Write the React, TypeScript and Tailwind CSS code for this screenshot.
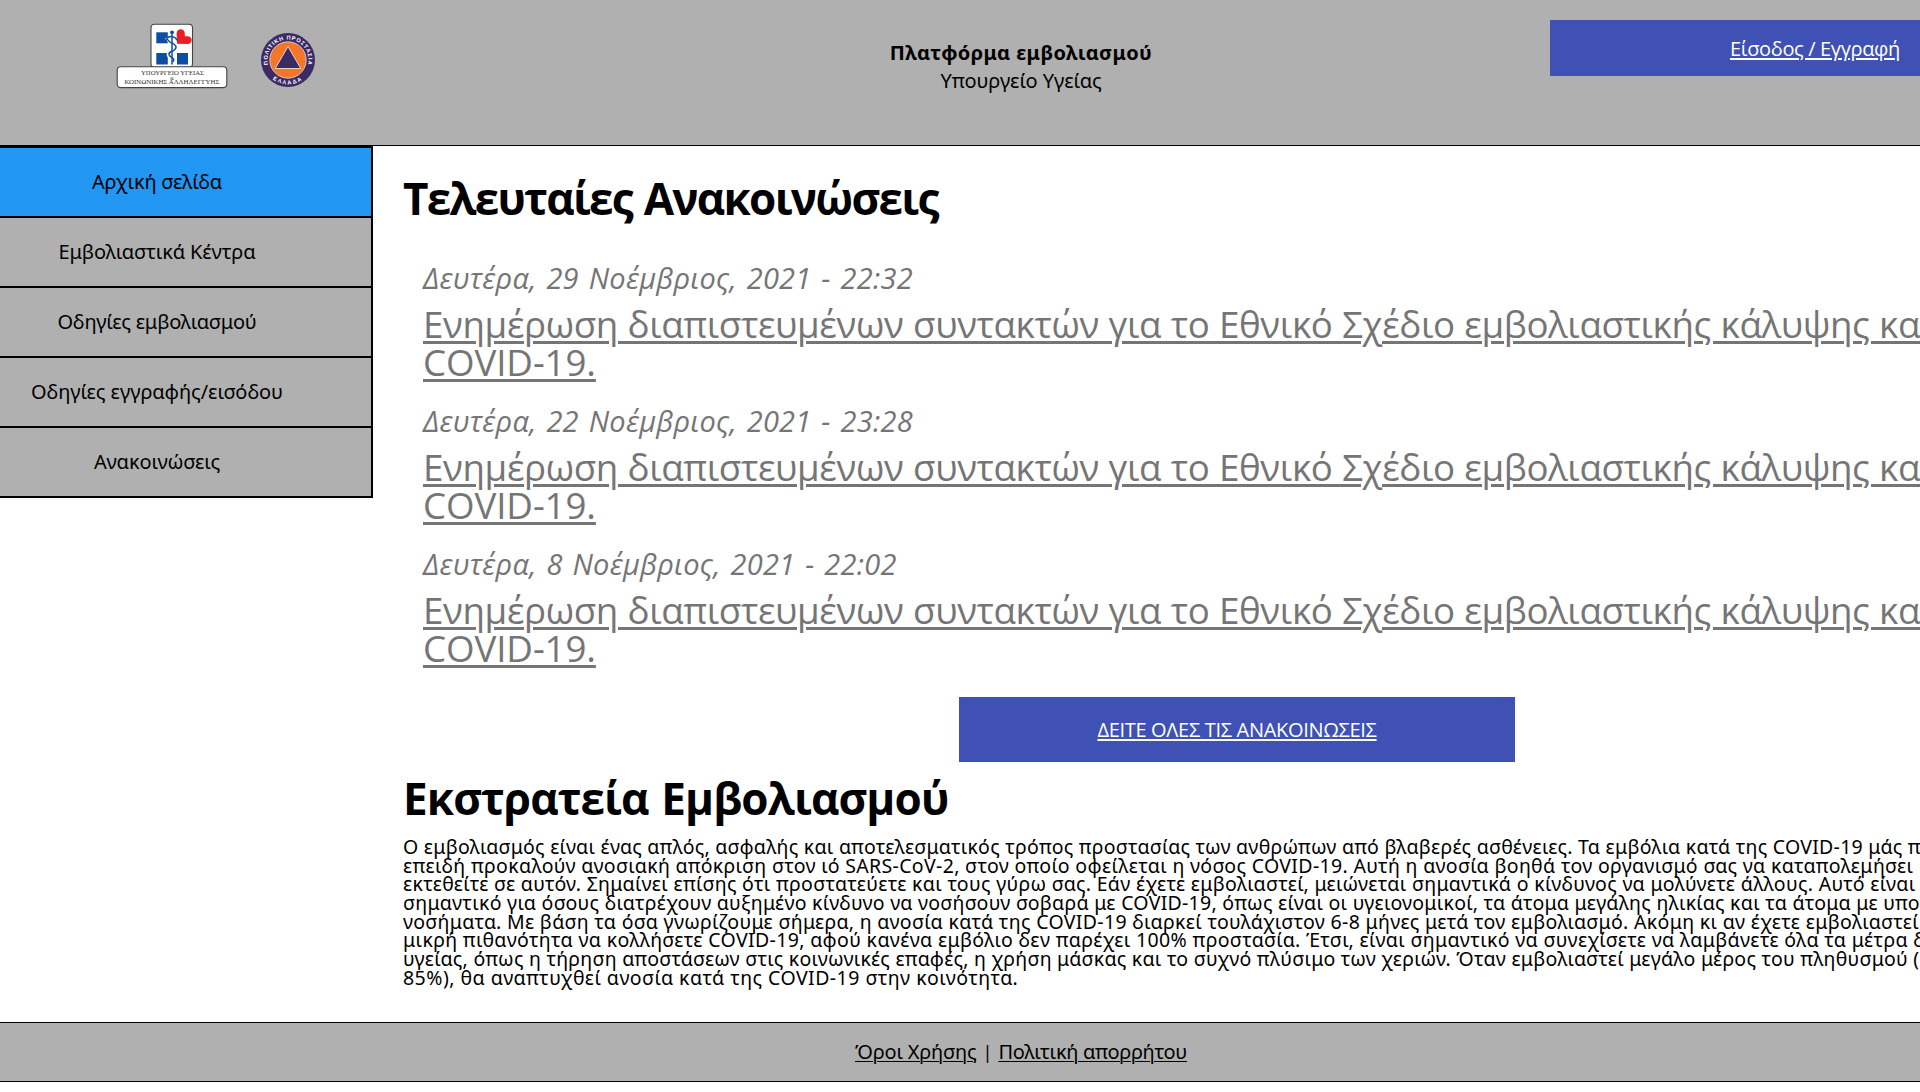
const navItems = [
  { label: "Αρχική σελίδα", className: "bg-[#2196f3] tracking-[-0.23px]" },
  { label: "Εμβολιαστικά Κέντρα", className: "bg-[#b0b0b0] tracking-[-0.15px]" },
  { label: "Οδηγίες εμβολιασμού", className: "bg-[#b0b0b0] tracking-[-0.24px]" },
  { label: "Οδηγίες εγγραφής/εισόδου", className: "bg-[#b0b0b0] tracking-[-0.07px]" },
  { label: "Ανακοινώσεις", className: "bg-[#b0b0b0] tracking-[-0.14px]" },
];

const announcements = [
  "Δευτέρα, 29 Νοέμβριος, 2021 - 22:32",
  "Δευτέρα, 22 Νοέμβριος, 2021 - 23:28",
  "Δευτέρα, 8 Νοέμβριος, 2021 - 22:02",
];

const campaignLines = [
  { text: "Ο εμβολιασμός είναι ένας απλός, ασφαλής και αποτελεσματικός τρόπος προστασίας των ανθρώπων από βλαβερές ασθένειες. Τα εμβόλια κατά της COVID-19 μάς π", className: "tracking-[0.257px]" },
  { text: "επειδή προκαλούν ανοσιακή απόκριση στον ιό SARS-CoV-2, στον οποίο οφείλεται η νόσος COVID-19. Αυτή η ανοσία βοηθά τον οργανισμό σας να καταπολεμήσει", className: "tracking-[0.337px]" },
  { text: "εκτεθείτε σε αυτόν. Σημαίνει επίσης ότι προστατεύετε και τους γύρω σας. Εάν έχετε εμβολιαστεί, μειώνεται σημαντικά ο κίνδυνος να μολύνετε άλλους. Αυτό είναι", className: "tracking-[0.315px]" },
  { text: "σημαντικό για όσους διατρέχουν αυξημένο κίνδυνο να νοσήσουν σοβαρά με COVID-19, όπως είναι οι υγειονομικοί, τα άτομα μεγάλης ηλικίας και τα άτομα με υπο", className: "tracking-[0.28px]" },
  { text: "νοσήματα. Με βάση τα όσα γνωρίζουμε σήμερα, η ανοσία κατά της COVID-19 διαρκεί τουλάχιστον 6-8 μήνες μετά τον εμβολιασμό. Ακόμη κι αν έχετε εμβολιαστεί", className: "tracking-[0.327px]" },
  { text: "μικρή πιθανότητα να κολλήσετε COVID-19, αφού κανένα εμβόλιο δεν παρέχει 100% προστασία. Έτσι, είναι σημαντικό να συνεχίσετε να λαμβάνετε όλα τα μέτρα δ", className: "tracking-[0.356px]" },
  { text: "υγείας, όπως η τήρηση αποστάσεων στις κοινωνικές επαφές, η χρήση μάσκας και το συχνό πλύσιμο των χεριών. Όταν εμβολιαστεί μεγάλο μέρος του πληθυσμού (", className: "tracking-[0.26px]" },
  { text: "85%), θα αναπτυχθεί ανοσία κατά της COVID-19 στην κοινότητα.", className: "tracking-[0.465px]" },
];

function MinistryLogo() {
  return (
    <svg width="112" height="66" viewBox="0 0 112 66" className="shrink-0" aria-label="Υπουργείο Υγείας">
      <rect x="35" y="1.2" width="41.5" height="43" rx="3.5" fill="#fff" stroke="#444" strokeWidth="1.1" />
      <rect x="1.2" y="43.8" width="109.6" height="20.8" rx="3.5" fill="#fff" stroke="#444" strokeWidth="1.1" />
      <g fill="#0b4ea2">
        <rect x="40.3" y="9.3" width="11.5" height="11" />
        <rect x="40.3" y="30" width="11.5" height="11.5" />
        <rect x="61" y="30" width="11" height="11.5" />
      </g>
      <path d="M61 20.8 60.6 10.5C60.6 5.4 68 4.6 68.7 9.8L68.9 13.2 72 13.3C77.3 14 76.6 21 71.6 21Z" fill="#ee1c25" />
      <g fill="none" stroke="#fff" strokeWidth="3.6">
        <path d="M56 9V41" />
        <path d="M51 15C52 20 61 19 60.5 24S51.5 28 52.5 32 59.5 35 57 39" />
      </g>
      <g fill="none" stroke="#0b4ea2" strokeWidth="1.5" strokeLinecap="round">
        <path d="M56 9V41" />
        <path d="M50.5 17C52 12 59 13 61 17M52 17C54 21 60.5 20 60 24.5S52 27.5 53 31.5 60 34.5 57 38.5" />
      </g>
      <circle cx="56" cy="9.3" r="1.9" fill="#0b4ea2" />
      <g fill="#333" textAnchor="middle" className="font-['Liberation_Serif',serif]">
        <text x="56.5" y="52.3" fontSize="6" textLength="63" lengthAdjust="spacingAndGlyphs">ΥΠΟΥΡΓΕΙΟ ΥΓΕΙΑΣ</text>
        <text x="56" y="56.7" fontSize="5">&amp;</text>
        <text x="56" y="61.3" fontSize="6" textLength="95" lengthAdjust="spacingAndGlyphs">ΚΟΙΝΩΝΙΚΗΣ ΑΛΛΗΛΕΓΓΥΗΣ</text>
      </g>
    </svg>
  );
}

function CivilProtectionLogo() {
  return (
    <svg width="56" height="56" viewBox="-28 -28 56 56" className="shrink-0" aria-label="Πολιτική Προστασία">
      <defs>
        <path id="ring-top" d="M-19.87 5.06A20.5 20.5 0 1 1 19.87 5.06" />
        <path id="ring-bottom" d="M-19.5 14.8A24.5 24.5 0 0 0 19.5 14.8" />
      </defs>
      <circle r="27" fill="#3b2a63" />
      <circle r="18.2" fill="#f37629" stroke="#e8dde4" strokeWidth="0.8" />
      <path d="M0-13.5 12.8 8.5H-12.8Z" fill="#3b2a63" stroke="#f3e3dd" strokeWidth="0.9" />
      <g fill="#fff" fontSize="5.6" className="font-['Liberation_Sans',sans-serif] font-bold">
        <text textLength="73" lengthAdjust="spacing">
          <textPath href="#ring-top" startOffset="0.5" textLength="73" lengthAdjust="spacing">ΠΟΛΙΤΙΚΗ ΠΡΟΣΤΑΣΙΑ</textPath>
        </text>
        <text textAnchor="middle" letterSpacing="1.6">
          <textPath href="#ring-bottom" startOffset="50%">ΕΛΛΑΔΑ</textPath>
        </text>
      </g>
    </svg>
  );
}

export default function App() {
  return (
    <div className="h-[1092px] w-full overflow-hidden bg-white font-['Noto_Sans',sans-serif] text-xl text-black">
      <header className="flex h-[146px] border-b border-black bg-[#b0b0b0]">
        <div className="flex w-[492px] items-start gap-8 pl-[116px] pt-[23px]">
          <MinistryLogo />
          <div className="pt-[9px]">
            <CivilProtectionLogo />
          </div>
        </div>
        <div className="flex-1 pt-[39px] text-center leading-7">
          <h1 className="font-bold tracking-[0.38px]">Πλατφόρμα εμβολιασμού</h1>
          <p className="tracking-[-0.08px]">Υπουργείο Υγείας</p>
        </div>
        <div className="mt-5 flex h-14 w-[370px] items-center justify-end bg-[#3f51b5] pr-5 pt-[2px]">
          <a href="#" className="font-['Open_Sans',sans-serif] tracking-[-0.35px] text-white underline decoration-2 underline-offset-2">
            Είσοδος / Εγγραφή
          </a>
        </div>
      </header>

      <div className="flex h-[876px]">
        <nav className="h-fit w-[373px] shrink-0 border-r-2 border-t-2 border-black">
          {navItems.map((item) => (
            <a
              key={item.label}
              href="#"
              className={`flex h-[70px] items-center justify-center border-b-2 border-black pr-[57px] ${item.className}`}
            >
              {item.label}
            </a>
          ))}
        </nav>

        <main className="min-w-0 flex-1 overflow-hidden pl-[30px] pt-[22px]">
          <h2 className="whitespace-nowrap font-['Open_Sans',sans-serif] text-[44px] font-bold leading-[60px] tracking-[-1.72px] [word-spacing:2px]">
            Τελευταίες Ανακοινώσεις
          </h2>
          <div className="mt-[31px] pl-[20px] font-['Open_Sans',sans-serif] text-[#757575]">
            {announcements.map((date) => (
              <article key={date} className="h-[143px] whitespace-nowrap">
                <p className="text-[29px] italic leading-[38px] tracking-[0.26px] [word-spacing:2px]">{date}</p>
                <a
                  href="#"
                  className="mt-[8px] block text-[36.7px] leading-[38px] tracking-[-0.38px] underline decoration-[3px] underline-offset-[3px] [word-spacing:0.5px]"
                >
                  Ενημέρωση διαπιστευμένων συντακτών για το Εθνικό Σχέδιο εμβολιαστικής κάλυψης κατά
                  <br />
                  <span className="tracking-[-0.1px]">COVID-19.</span>
                </a>
              </article>
            ))}
          </div>
          <a
            href="#"
            className="ml-[556px] mt-[9px] flex h-[65px] w-[556px] items-center justify-center bg-[#3f51b5] font-['Open_Sans',sans-serif] tracking-[-0.32px] text-white underline decoration-2 underline-offset-2"
          >
            ΔΕΙΤΕ ΟΛΕΣ ΤΙΣ ΑΝΑΚΟΙΝΩΣΕΙΣ
          </a>
          <h2 className="mt-[6px] whitespace-nowrap font-['Open_Sans',sans-serif] text-[44px] font-bold leading-[60px] tracking-[-0.88px] [word-spacing:2px]">
            Εκστρατεία Εμβολιασμού
          </h2>
          <div className="mt-[10px] whitespace-nowrap text-[19.5px] leading-[18.67px]">
            {campaignLines.map((line) => (
              <p key={line.text} className={line.className}>
                {line.text}
              </p>
            ))}
          </div>
        </main>
      </div>

      <footer className="flex h-[60px] items-center justify-center gap-[6px] border-y border-black bg-[#b0b0b0] pl-[122px]">
        <a href="#" className="tracking-[-0.22px] underline decoration-1 underline-offset-2">Όροι Χρήσης</a>
        <span className="text-lg leading-5">|</span>
        <a href="#" className="tracking-[-0.32px] underline decoration-1 underline-offset-2">Πολιτική απορρήτου</a>
      </footer>
    </div>
  );
}
